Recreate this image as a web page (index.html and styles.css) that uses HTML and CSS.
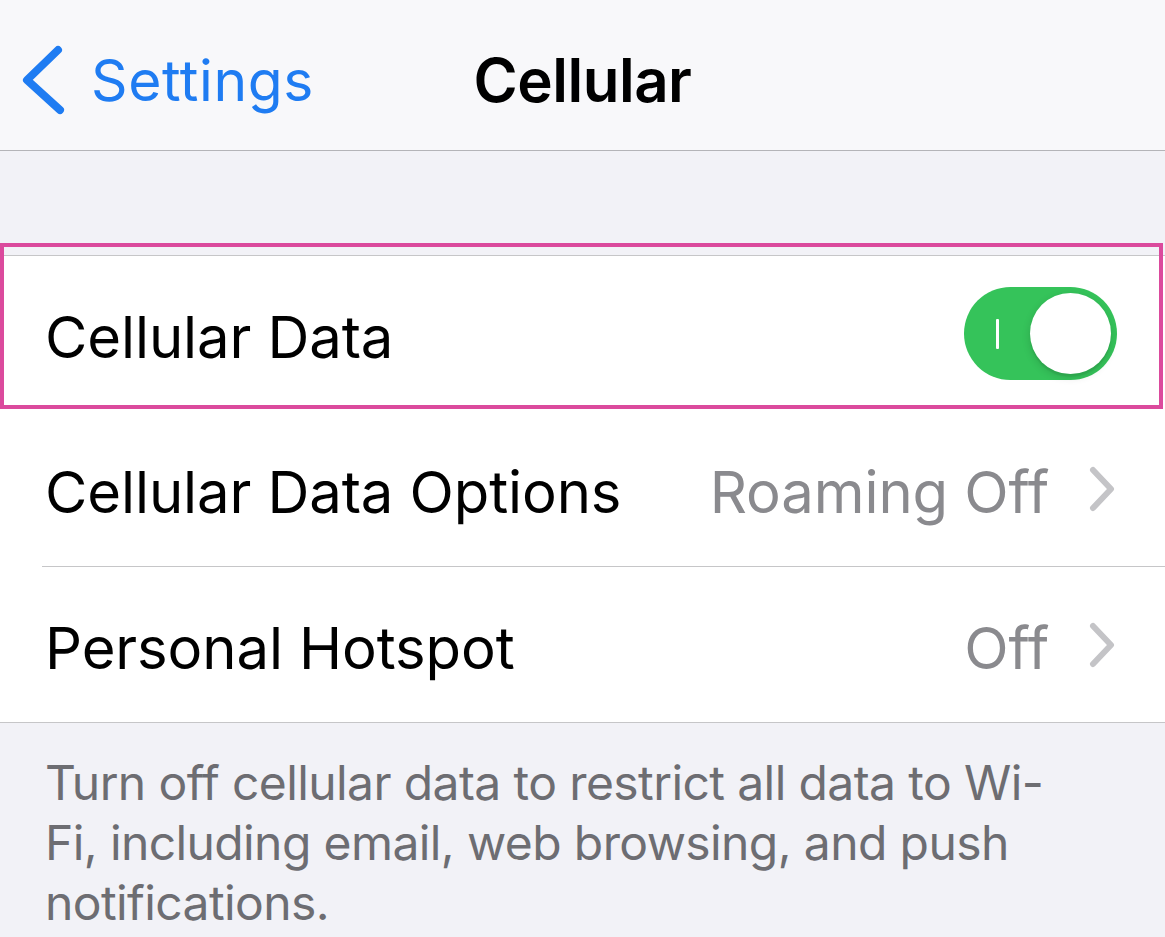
FILE: index.html
```html
<!DOCTYPE html>
<html lang="en">
<head>
<meta charset="utf-8">
<title>Cellular</title>
<link rel="stylesheet" href="styles.css">
</head>
<body>
<div class="screen">
  <header class="nav">
    <a class="back" href="#">
      <svg class="back-icon" width="48" height="74" viewBox="0 0 48 74" aria-hidden="true">
        <path d="M38 7 L7 37 L40 67" fill="none" stroke="currentColor" stroke-width="8" stroke-linecap="round" stroke-linejoin="round"/>
      </svg>
      <span>Settings</span>
    </a>
    <h1 class="title">Cellular</h1>
    <div class="nav-end"></div>
  </header>

  <div class="gap"></div>

  <section class="group">
    <div class="highlight"></div>
    <div class="row">
      <span class="label">Cellular Data</span>
      <span class="switch on"><span class="switch-mark"></span><span class="knob"></span></span>
    </div>
    <div class="row">
      <div class="row-inner sep">
        <span class="label">Cellular Data Options</span>
        <span class="value">Roaming Off</span>
        <svg class="chev" width="28" height="46" viewBox="0 0 28 46" aria-hidden="true">
          <path d="M4 4 L22 23 L4 42" fill="none" stroke="currentColor" stroke-width="6" stroke-linecap="round" stroke-linejoin="round"/>
        </svg>
      </div>
    </div>
    <div class="row">
      <div class="row-inner">
        <span class="label">Personal Hotspot</span>
        <span class="value">Off</span>
        <svg class="chev" width="28" height="46" viewBox="0 0 28 46" aria-hidden="true">
          <path d="M4 4 L22 23 L4 42" fill="none" stroke="currentColor" stroke-width="6" stroke-linecap="round" stroke-linejoin="round"/>
        </svg>
      </div>
    </div>
  </section>

  <p class="footer">Turn off cellular data to restrict all data to Wi-Fi, including email, web browsing, and push notifications.</p>
</div>
</body>
</html>
```

FILE: styles.css
```css
* { box-sizing: border-box; }
html, body {
  margin: 0;
  padding: 0;
  background: #f2f2f7;
}
body {
  font-family: Inter, "Noto Sans", "Liberation Sans", sans-serif;
  -webkit-font-smoothing: antialiased;
}
.screen {
  width: 1165px;
  min-height: 937px;
  background: #f2f2f7;
  overflow: hidden;
}
.nav {
  height: 151px;
  background: #f8f8fa;
  border-bottom: 1px solid #b4b4b8;
  display: grid;
  grid-template-columns: 1fr auto 1fr;
  align-items: center;
  padding-top: 10px;
}
.back {
  display: flex;
  align-items: center;
  gap: 23px;
  padding-left: 20px;
  color: #1f7cf2;
  text-decoration: none;
  font-size: 57px;
  font-weight: 400;
  letter-spacing: 0.6px;
}
.back-icon { display: block; }
.title {
  margin: 0;
  font-size: 60px;
  font-weight: 600;
  color: #000;
  letter-spacing: -0.5px;
}
.gap { height: 104px; }
.group {
  position: relative;
  background: #fff;
  border-top: 1px solid #c6c6c8;
  border-bottom: 1px solid #c6c6c8;
}
.highlight {
  position: absolute;
  left: 0;
  top: -13px;
  width: 1163px;
  height: 166px;
  border: 4px solid #db4a9d;
  pointer-events: none;
  z-index: 2;
}
.row {
  height: 155px;
  display: flex;
  align-items: center;
  padding-left: 45px;
  padding-right: 48px;
  font-size: 58px;
  color: #000;
  letter-spacing: -0.1px;
}
.row:nth-child(3) { height: 156px; }
.row-inner {
  flex: 1;
  align-self: stretch;
  display: flex;
  align-items: center;
}
.row-inner.sep {
  margin-left: -3px;
  padding-left: 3px;
  margin-right: -48px;
  padding-right: 48px;
  border-bottom: 1px solid #c6c6c8;
}
.label { flex: 1; padding-top: 6px; }
.value {
  color: #8a8a8e;
  padding-top: 6px;
  margin-right: 40px;
}
.chev { color: #c4c4c7; display: block; }
.switch {
  position: relative;
  width: 153px;
  height: 93px;
  border-radius: 47px;
  background: #35c35a;
  display: block;
}
.switch-mark {
  position: absolute;
  left: 32px;
  top: 32px;
  width: 3px;
  height: 30px;
  background: #fff;
  border-radius: 1px;
}
.knob {
  position: absolute;
  right: 6px;
  top: 6px;
  width: 81px;
  height: 81px;
  border-radius: 50%;
  background: #fff;
  box-shadow: 0 3px 8px rgba(0,0,0,0.15), 0 3px 1px rgba(0,0,0,0.06);
}
.footer {
  margin: 0;
  padding: 30px 100px 0 45px;
  font-size: 48px;
  line-height: 60px;
  letter-spacing: -0.6px;
  color: #6d6d72;
}
```
